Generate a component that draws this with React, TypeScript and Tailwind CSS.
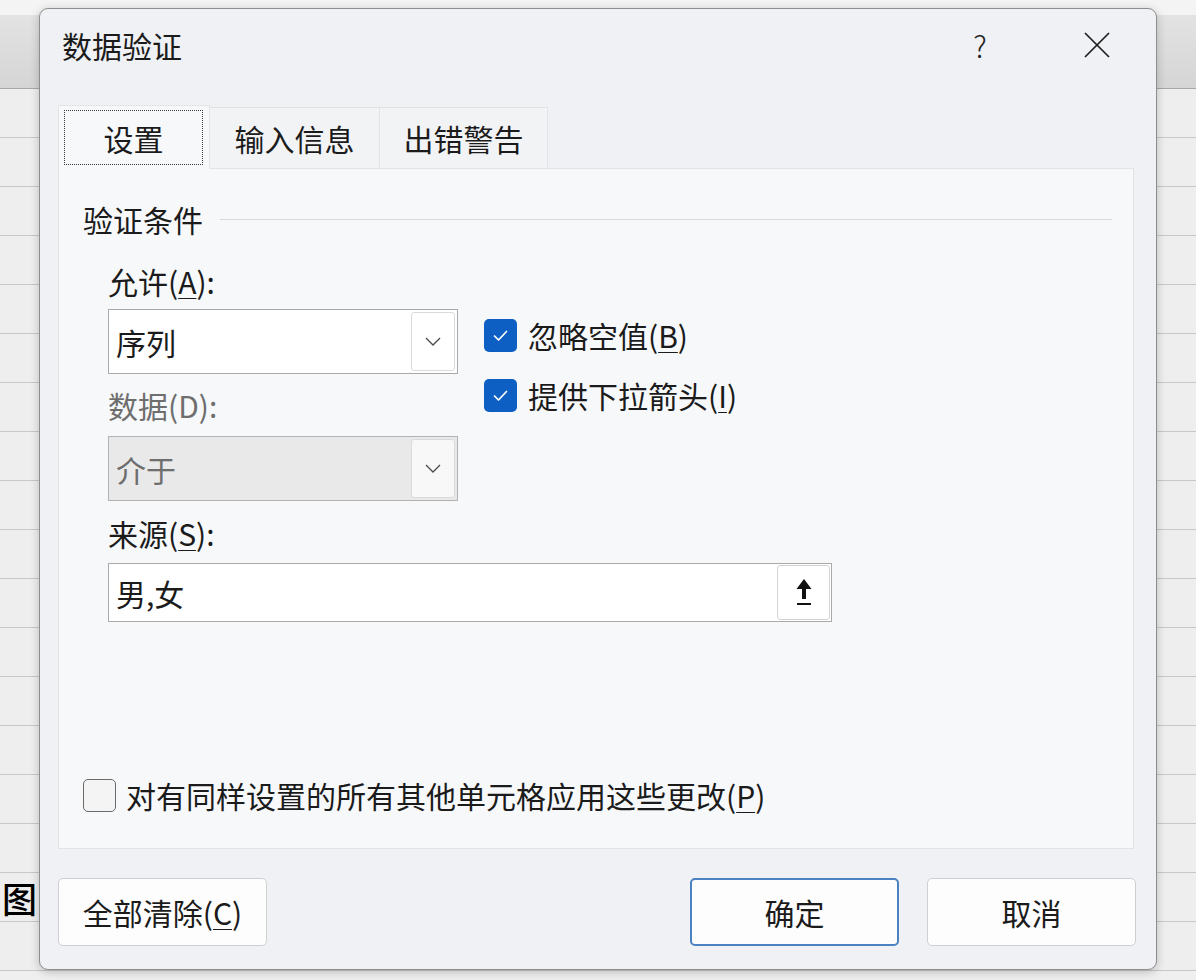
import React from "react";

const ROWS = Array.from({ length: 18 });
const COLS = Array.from({ length: 7 });

function U({ children }: { children: React.ReactNode }) {
  return <span className="underline decoration-1 underline-offset-[4px]">{children}</span>;
}

function Chevron() {
  return (
    <svg width="16" height="9" viewBox="0 0 16 9" fill="none">
      <polyline points="1,1 8,8 15,1" stroke="#4a4a4a" strokeWidth="1.3" />
    </svg>
  );
}

function ComboBox({ value, disabled }: { value: string; disabled?: boolean }) {
  return (
    <div
      className={`flex h-[65px] w-[350px] items-stretch border py-[2px] pr-[2px] ${
        disabled ? "border-[#b2b2b2] bg-[#e9e9ea]" : "border-[#a9a9a9] bg-white"
      }`}
    >
      <div
        className={`flex flex-1 items-center pl-[7px] text-[30px] leading-[36px] ${
          disabled ? "text-[#6e6e6e]" : "text-[#1b1b1b]"
        }`}
      >
        {value}
      </div>
      <div
        className={`flex w-[44px] items-center justify-center rounded-[3px] border border-[#dadada] ${
          disabled ? "bg-[#f8f8f8]" : "bg-white"
        }`}
      >
        <Chevron />
      </div>
    </div>
  );
}

function CheckBox({ checked }: { checked?: boolean }) {
  if (!checked) {
    return <div className="h-[33px] w-[33px] shrink-0 rounded-[5px] border-[1.5px] border-[#6b6b6b] bg-[#f4f4f4]" />;
  }
  return (
    <div className="flex h-[33px] w-[33px] shrink-0 items-center justify-center rounded-[5px] bg-[#0d5fc3]">
      <svg width="33" height="33" viewBox="0 0 33 33" fill="none">
        <polyline
          points="10.5,17 14.5,21 22.5,12.5"
          stroke="white"
          strokeWidth="1.7"
          strokeLinecap="round"
          strokeLinejoin="round"
        />
      </svg>
    </div>
  );
}

function Button({ children, primary }: { children: React.ReactNode; primary?: boolean }) {
  return (
    <div
      className={`flex h-[68px] w-[209px] items-center justify-center rounded-[5px] bg-[#fdfdfd] text-[30px] leading-[36px] text-[#1b1b1b] ${
        primary ? "border-2 border-[#4a82c3]" : "border border-[#cfd0d2]"
      }`}
    >
      {children}
    </div>
  );
}

export default function App() {
  return (
    <div className="relative h-[980px] w-[1196px] overflow-hidden bg-[#efefef] font-['Noto_Sans_CJK_SC',sans-serif] text-[#1b1b1b]">
      {/* sheet behind the dialog */}
      <div className="flex flex-col">
        <div className="h-[15px] bg-[#f4f4f4]" />
        <div className="h-[74px] border-b border-[#a8a8a8] bg-linear-to-b from-[#e3e3e3] to-[#d5d5d5]" />
        {ROWS.map((_, r) => (
          <div key={r} className="flex h-[49px] shrink-0 border-b border-[#c8c8c8] bg-[#eeeeee]">
            <div className="flex w-[163px] shrink-0 items-center border-r border-[#c8c8c8] pl-[2px]">
              {r === 16 && <span className="text-[35px] font-medium leading-none text-black">图</span>}
            </div>
            {COLS.map((_, c) => (
              <div key={c} className="w-[162px] shrink-0 border-r border-[#c8c8c8]" />
            ))}
          </div>
        ))}
      </div>

      {/* dialog */}
      <div className="absolute left-[39px] top-[8px] flex h-[962px] w-[1118px] flex-col rounded-[9px] border border-[#8e8e8e] bg-[#eff1f4] shadow-[0_2px_10px_rgba(0,0,0,0.22)]">
        {/* title bar */}
        <div className="flex h-[71px] items-center pl-[22px] pr-[39px]">
          <span className="text-[30px] leading-[36px]">数据验证</span>
          <div className="ml-auto flex w-[40px] justify-center text-[30px] font-light leading-[36px] text-[#222]">?</div>
          <div className="ml-[77px] flex w-[40px] justify-center">
            <svg width="26" height="26" viewBox="0 0 26 26" fill="none">
              <line x1="1" y1="1" x2="25" y2="25" stroke="#1f1f1f" strokeWidth="1.7" />
              <line x1="25" y1="1" x2="1" y2="25" stroke="#1f1f1f" strokeWidth="1.7" />
            </svg>
          </div>
        </div>

        {/* tabs */}
        <div className="mt-[25px] flex h-[63px] items-end pl-[18px]">
          <div className="relative z-10 -mb-px flex h-[64px] w-[152px] items-stretch border-x border-t border-[#e2e3e5] bg-[#f7f8fa] pb-[4px] pl-[5px] pr-[6px] pt-[4px]">
            <div className="flex flex-1 items-center justify-center border border-dotted border-[#3a3a3a] text-[30px] leading-[36px]">
              设置
            </div>
          </div>
          <div className="flex h-[61px] w-[170px] items-center justify-center border-r border-t border-[#e1e2e4] bg-[#f2f3f5] text-[30px] leading-[36px]">
            输入信息
          </div>
          <div className="flex h-[61px] w-[168px] items-center justify-center border-r border-t border-[#e1e2e4] bg-[#f2f3f5] text-[30px] leading-[36px]">
            出错警告
          </div>
        </div>

        {/* settings panel */}
        <div className="ml-[18px] mr-[22px] flex h-[681px] flex-col border border-[#e2e3e5] bg-[#f7f8fa] pb-[35px] pl-[24px] pr-[21px] pt-[32px] text-[30px] leading-[36px]">
          <div className="flex h-[36px] items-center">
            <span>验证条件</span>
            <div className="ml-[17px] h-px flex-1 bg-[#d8d9db]" />
          </div>

          <div className="pl-[25px]">
            <div className="mt-[26px] flex">
              <div className="flex w-[350px] flex-col">
                <div>
                  允许(<U>A</U>):
                </div>
                <div className="mt-[10px]">
                  <ComboBox value="序列" />
                </div>
                <div className="mt-[13px] text-[#6e6e6e]">数据(D):</div>
                <div className="mt-[13px]">
                  <ComboBox value="介于" disabled />
                </div>
              </div>
              <div className="ml-[26px] flex flex-col gap-[24px] pt-[54px]">
                <div className="flex items-center gap-[11px]">
                  <CheckBox checked />
                  <span>
                    忽略空值(<U>B</U>)
                  </span>
                </div>
                <div className="flex items-center gap-[11px]">
                  <CheckBox checked />
                  <span>
                    提供下拉箭头(<U>I</U>)
                  </span>
                </div>
              </div>
            </div>

            <div className="mt-[14px]">
              来源(<U>S</U>):
            </div>
            <div className="mt-[12px] flex h-[59px] w-[724px] items-stretch border border-[#a9a9a9] bg-white py-[1px] pr-[1px]">
              <div className="flex flex-1 items-center pl-[7px]">男,女</div>
              <div className="flex w-[53px] items-center justify-center rounded-[3px] border border-[#d3d3d3] bg-white">
                <svg width="20" height="30" viewBox="0 0 20 30" fill="none">
                  <polygon points="10,1 17.5,11 2.5,11" fill="#111" />
                  <rect x="8" y="10" width="4" height="11" fill="#111" />
                  <rect x="3" y="25" width="14" height="2" fill="#111" />
                </svg>
              </div>
            </div>
          </div>

          <div className="mt-auto flex items-center gap-[10px]">
            <CheckBox />
            <span>
              对有同样设置的所有其他单元格应用这些更改(<U>P</U>)
            </span>
          </div>
        </div>

        {/* buttons */}
        <div className="mt-[29px] flex pl-[18px] pr-[20px]">
          <Button>
            全部清除(<U>C</U>)
          </Button>
          <div className="ml-auto flex gap-[28px]">
            <Button primary>确定</Button>
            <Button>取消</Button>
          </div>
        </div>
      </div>
    </div>
  );
}
